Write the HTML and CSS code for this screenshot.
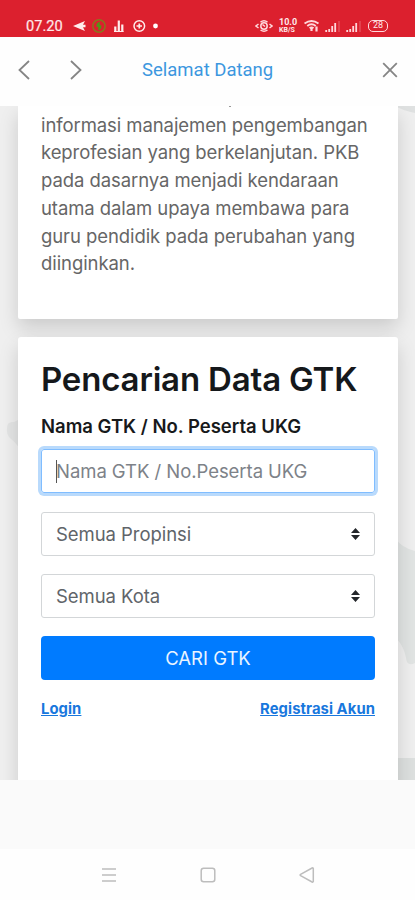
FILE: index.html
```html
<!DOCTYPE html>
<html lang="id">
<head>
<meta charset="utf-8">
<title>Selamat Datang</title>
<link rel="stylesheet" href="styles.css">
</head>
<body>
<div class="status">
  <span class="clock">07.20</span>
  <svg class="status-left" width="88" height="16" viewBox="0 0 88 16" fill="none" stroke="#ffecec">
    <path d="M0 8 12 3 10 6.800h2.500v2.400H10L12 13Z" fill="#ffecec" stroke="none"/>
    <circle cx="26" cy="8" r="6.200" stroke="#8a751d" stroke-width="1.500"/>
    <path d="M26 4v8M23.300 8h5M24 5.500l4 5" stroke="#4d9b17" stroke-width="1.500"/>
    <path d="M42.300 14V8.500M45.800 14V2.500M49.300 14V6.500" stroke-width="2.200"/><path d="M41 13.500h9.500"/>
    <circle cx="66.300" cy="8" r="5.300" stroke-width="1.500"/>
    <path d="M63.500 8h5.500M66.300 5.500v5" stroke-width="1.700"/>
    <circle cx="82.500" cy="8" r="2.400" fill="#fff" stroke="none"/>
  </svg>
  <svg class="status-right" width="18" height="16" viewBox="0 0 18 16" fill="none" stroke="#ffd8dc" stroke-width="1.500">
    <circle cx="9" cy="8" r="3.200"/><path d="M7.500 6.500 10 8.500M5.500 4.200Q9 1.500 12.500 4.200M5.500 12Q9 14.500 12.500 12M3.500 6 1 8l2.500 2M14.500 6 17 8l-2.500 2"/>
  </svg>
  <span class="speed"><b>10.0</b><b>KB/S</b></span>
  <svg width="57" height="16" viewBox="0 0 57 16" fill="none" stroke="#ffd8dc">
    <path d="M.5 5.500Q7.500 .5 14.500 5.500M3.300 8Q7.500 4.500 11.700 8M5.600 10.300Q7.500 8.500 9.500 10.300" stroke-width="1.900"/>
    <path d="M7.500 10v3M12.500 8.500v5" stroke-width="2.200"/>
    <path d="M22.200 14v-2M25.200 14v-3M28.200 14V8M31.200 14V5M43.200 14v-2M46.200 14v-3M49.200 14V8M52.200 14V5" stroke-width="1.800"/>
    <path d="M35 14V3M56 14V3" stroke-width="1.500" opacity=".25"/>
  </svg>
  <span class="battery">28</span>
</div>
<header class="nav">
  <svg width="12" height="20" viewBox="0 0 12 20"><path d="M11 1 1.500 10 11 19"/></svg>
  <svg width="12" height="20" viewBox="0 0 12 20"><path d="M1 1 10.500 10 1 19"/></svg>
  <span class="nav-title">Selamat Datang</span>
  <svg width="16" height="16" viewBox="0 0 16 16"><path d="M1.200 1.200 14.800 14.800M14.800 1.200 1.200 14.800"/></svg>
</header>
<main class="page">
  <svg class="backdrop" width="415" height="674" viewBox="0 0 415 674">
    <path d="M395 0h20v7Q404 5 395 0Z" fill="#dfe1e1"/>
    <path d="M395 432Q402 442 415 445v112q-8 4-9-5-2-11-9-19Z" fill="#e1e4e3"/>
    <path d="M395 652h20v22h-20Z" fill="#dde0df"/>
    <path d="M7 322Q7 315 14 316l6-3v30q-5-7-9-10-5-4-4-11Z" fill="#e4e5e5"/>
  </svg>
  <section class="card intro">
    <p>informasi manajemen pengembangan<br>keprofesian yang berkelanjutan. PKB<br>pada dasarnya menjadi kendaraan<br>utama dalam upaya membawa para<br>guru pendidik pada perubahan yang<br>diinginkan.</p>
  </section>
  <section class="card search">
    <h1>Pencarian Data GTK</h1>
    <label>Nama GTK / No. Peserta UKG</label>
    <div class="field focused"><i class="caret"></i><span>Nama GTK / No.Peserta UKG</span></div>
    <div class="field"><span>Semua Propinsi</span><svg width="9" height="12" viewBox="0 0 9 12"><path d="M0 5 4.500 0 9 5ZM0 7h9l-4.500 5Z"/></svg></div>
    <div class="field"><span>Semua Kota</span><svg width="9" height="12" viewBox="0 0 9 12"><path d="M0 5 4.500 0 9 5ZM0 7h9l-4.500 5Z"/></svg></div>
    <button>CARI GTK</button>
    <div class="links"><a href="#">Login</a><a href="#">Registrasi Akun</a></div>
  </section>
</main>
<div class="spacer"></div>
<footer class="keys">
  <svg width="16" height="16" viewBox="0 0 16 16"><path d="M1 2h14M1 8h14M1 14h14"/></svg>
  <svg width="16" height="16" viewBox="0 0 16 16"><rect x="1.200" y="1.200" width="13.600" height="13.600" rx="2.500"/></svg>
  <svg width="16" height="16" viewBox="0 0 16 16"><path d="M14.300 1.400v13.200q-.3.800-1.200.4L1.600 8.700q-.9-.7 0-1.400L13.100 1q.9-.4 1.200.4Z"/></svg>
</footer>
</body>
</html>
```
FILE: styles.css
```css
* { box-sizing: border-box; }
body { margin: 0; width: 415px; height: 900px; overflow: hidden; background: #fefefe; font-family: Inter, sans-serif; display: flex; flex-direction: column; }
svg { display: block; flex: none; }
.status { height: 37px; flex: none; background: #dc202e; display: flex; align-items: center; padding: 15px 0 0 26px; color: #ffe9ea; font-family: Roboto, sans-serif; }
.clock { width: 47px; font-size: 14.6px; line-height: 16px; -webkit-text-stroke: .2px; }
.status-left { margin-right: 94px; }
.speed { width: 20px; margin: 0 5px 0 6px; display: flex; flex-direction: column; font-size: 9px; line-height: 8px; }
.speed b + b { font-size: 7px; line-height: 8px; }
.battery { width: 20px; height: 12px; margin-left: 7px; border: 1.5px solid #ffd8dc; border-radius: 5px; font-size: 9px; line-height: 9px; text-align: center; }
.nav { height: 69px; flex: none; display: flex; align-items: center; padding: 0 17px 4px 18px; background: #fefefe; }
.nav svg { fill: none; stroke: #858585; stroke-width: 1.8; }
.nav svg + svg { margin-left: 40px; }
.nav-title { flex: 1; margin-left: 60px; font: 18.5px/24px Roboto, sans-serif; color: #3c97df; padding-top: 1px; }
.page { position: relative; height: 674px; flex: none; overflow: hidden; background: #efefef; padding: 0 17px 0 18px; }
.backdrop { position: absolute; left: 0; top: 0; }
.card { position: relative; background: #fff; border-radius: 3px; box-shadow: 0 9px 19px rgba(0,0,0,.15); padding: 0 23px; }
.intro { height: 213px; margin-bottom: 18px; display: flex; align-items: flex-end; padding-bottom: 41px; border-radius: 0 0 2px 2px; }
.intro::before { content: ""; position: absolute; left: 211px; top: 0; width: 2px; height: 1px; background: #999; }
.intro p { margin: 0; font-size: 18.5px; line-height: 27.75px; letter-spacing: -.08px; color: #666; white-space: nowrap; }
.search { height: 520px; padding-top: 22px; display: flex; flex-direction: column; }
h1 { margin: 0 0 13px; font-size: 33px; line-height: 40px; font-weight: 600; letter-spacing: -.17px; color: #15181b; white-space: nowrap; }
label { font-size: 18.5px; line-height: 28px; font-weight: 600; color: #17191b; margin-bottom: 9px; white-space: nowrap; }
.field { height: 44px; flex: none; border: 1px solid #d3d6d8; border-radius: 3px; margin-bottom: 18px; padding: 0 14px; display: flex; align-items: center; justify-content: space-between; font-size: 18.5px; letter-spacing: -.05px; color: #606469; }
.focused { border-color: #80bdff; box-shadow: 0 0 0 3px #b9dafc; color: #7d8288; position: relative; margin-bottom: 19px; }
.caret { position: absolute; left: 14px; top: 10px; width: 1px; height: 23px; background: #555; }
.field svg { fill: #24272b; }
button { height: 44px; flex: none; border: 0; border-radius: 4px; background: #007bff; color: #e9f4ff; font: 18.5px/28px Inter, sans-serif; }
.links { display: flex; justify-content: space-between; margin-top: 18px; font-size: 14.8px; line-height: 22px; font-weight: 650; }
.links a { color: #1877dd; text-decoration: underline; letter-spacing: .08px; }
.spacer { height: 69px; flex: none; background: #fafafa; }
.keys { height: 51px; display: flex; justify-content: center; gap: 83px; padding-top: 18px; }
.keys svg { fill: none; stroke: #bdbdbd; stroke-width: 1.5; }
```
